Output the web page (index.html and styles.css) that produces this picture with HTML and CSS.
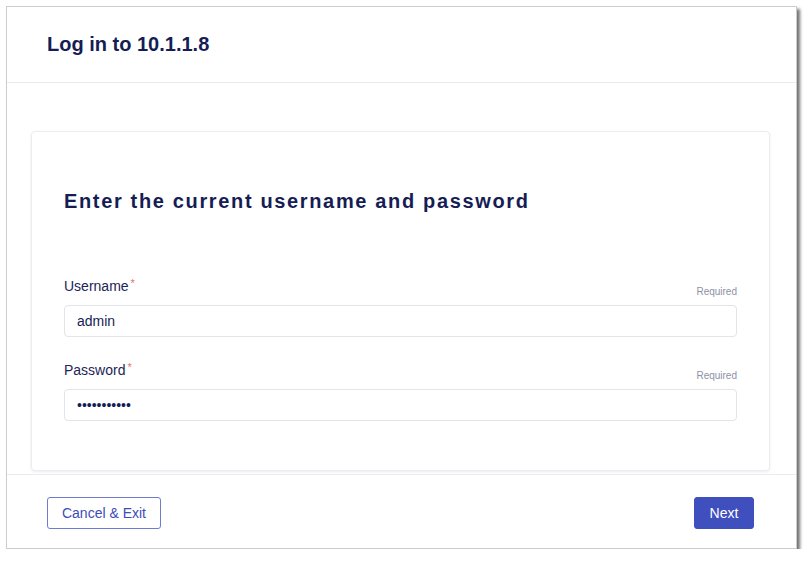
FILE: index.html
```html
<!DOCTYPE html>
<html lang="en">
<head>
<meta charset="utf-8">
<title>Log in</title>
<link rel="stylesheet" href="styles.css">
</head>
<body>
<div class="window">
  <header class="header">
    <h1 class="title">Log in to 10.1.1.8</h1>
  </header>
  <main class="main">
    <section class="card">
      <h2 class="heading">Enter the current username and password</h2>
      <div class="field">
        <div class="label-row">
          <label class="label" for="user">Username<span class="star">*</span></label>
          <span class="req">Required</span>
        </div>
        <input class="input" id="user" type="text" value="admin">
      </div>
      <div class="field">
        <div class="label-row">
          <label class="label" for="pass">Password<span class="star">*</span></label>
          <span class="req">Required</span>
        </div>
        <input class="input" id="pass" type="password" value="abcdefghijk">
      </div>
    </section>
  </main>
  <footer class="footer">
    <button class="btn btn-outline" type="button">Cancel &amp; Exit</button>
    <button class="btn btn-primary" type="button">Next</button>
  </footer>
</div>
</body>
</html>
```

FILE: styles.css
```css
* { box-sizing: border-box; }
html, body { margin: 0; padding: 0; background: #ffffff; }
body {
  font-family: "Liberation Sans", Arial, sans-serif;
  color: #161d55;
  padding: 6px 0 0 6px;
}
.window {
  width: 791px;
  height: 543px;
  border: 1px solid #cccccc;
  background: #ffffff;
  box-shadow: 3px 3px 3px rgba(0, 0, 0, 0.55);
  display: flex;
  flex-direction: column;
}
.header {
  height: 76px;
  border-bottom: 1px solid #ebebf3;
  padding: 0 40px;
  display: flex;
  align-items: center;
  flex-shrink: 0;
}
.title {
  margin: 0;
  font-size: 20px;
  font-weight: bold;
  line-height: 24px;
  color: #161d55;
  position: relative;
  top: -1px;
}
.main {
  flex: 1;
  padding: 48px 26px 3px 24px;
  display: flex;
  flex-direction: column;
}
.card {
  flex: 1;
  border: 1px solid #ececf0;
  border-radius: 4px;
  box-shadow: 0 1px 3px rgba(0, 0, 0, 0.08);
  padding: 57px 32px 0 32px;
}
.heading {
  margin: 0 0 63px 0;
  font-size: 20px;
  line-height: 24px;
  font-weight: bold;
  letter-spacing: 1.65px;
  color: #161d55;
}
.field { margin-bottom: 23px; }
.label-row {
  display: flex;
  justify-content: space-between;
  align-items: flex-end;
  height: 20px;
  margin-bottom: 9px;
}
.label {
  font-size: 14px;
  line-height: 20px;
  color: #1d2457;
  position: relative;
  top: 1px;
}
.star {
  color: #e8725c;
  font-size: 11px;
  margin-left: 2px;
  position: relative;
  top: -4px;
}
.req {
  font-size: 10px;
  line-height: 14px;
  color: #8d91a8;
  position: relative;
  top: 3px;
}
.input {
  display: block;
  width: 100%;
  height: 32px;
  border: 1px solid #e3e3ea;
  border-radius: 4px;
  padding: 0 12px;
  font-family: "Liberation Sans", Arial, sans-serif;
  font-size: 14px;
  color: #161d55;
  background: #ffffff;
  outline: none;
}
.footer {
  height: 74px;
  border-top: 1px solid #ebebf3;
  flex-shrink: 0;
  display: flex;
  justify-content: space-between;
  align-items: flex-start;
  padding: 22px 42px 0 40px;
}
.btn {
  height: 32px;
  border-radius: 3px;
  font-family: "Liberation Sans", Arial, sans-serif;
  font-size: 14px;
  cursor: pointer;
}
.btn-outline {
  width: 114px;
  border: 1px solid #6f7bd0;
  background: #ffffff;
  color: #3d4cb8;
}
.btn-primary {
  width: 60px;
  border: 1px solid #3f4fbd;
  background: #3f4fbd;
  color: #ffffff;
}
```
